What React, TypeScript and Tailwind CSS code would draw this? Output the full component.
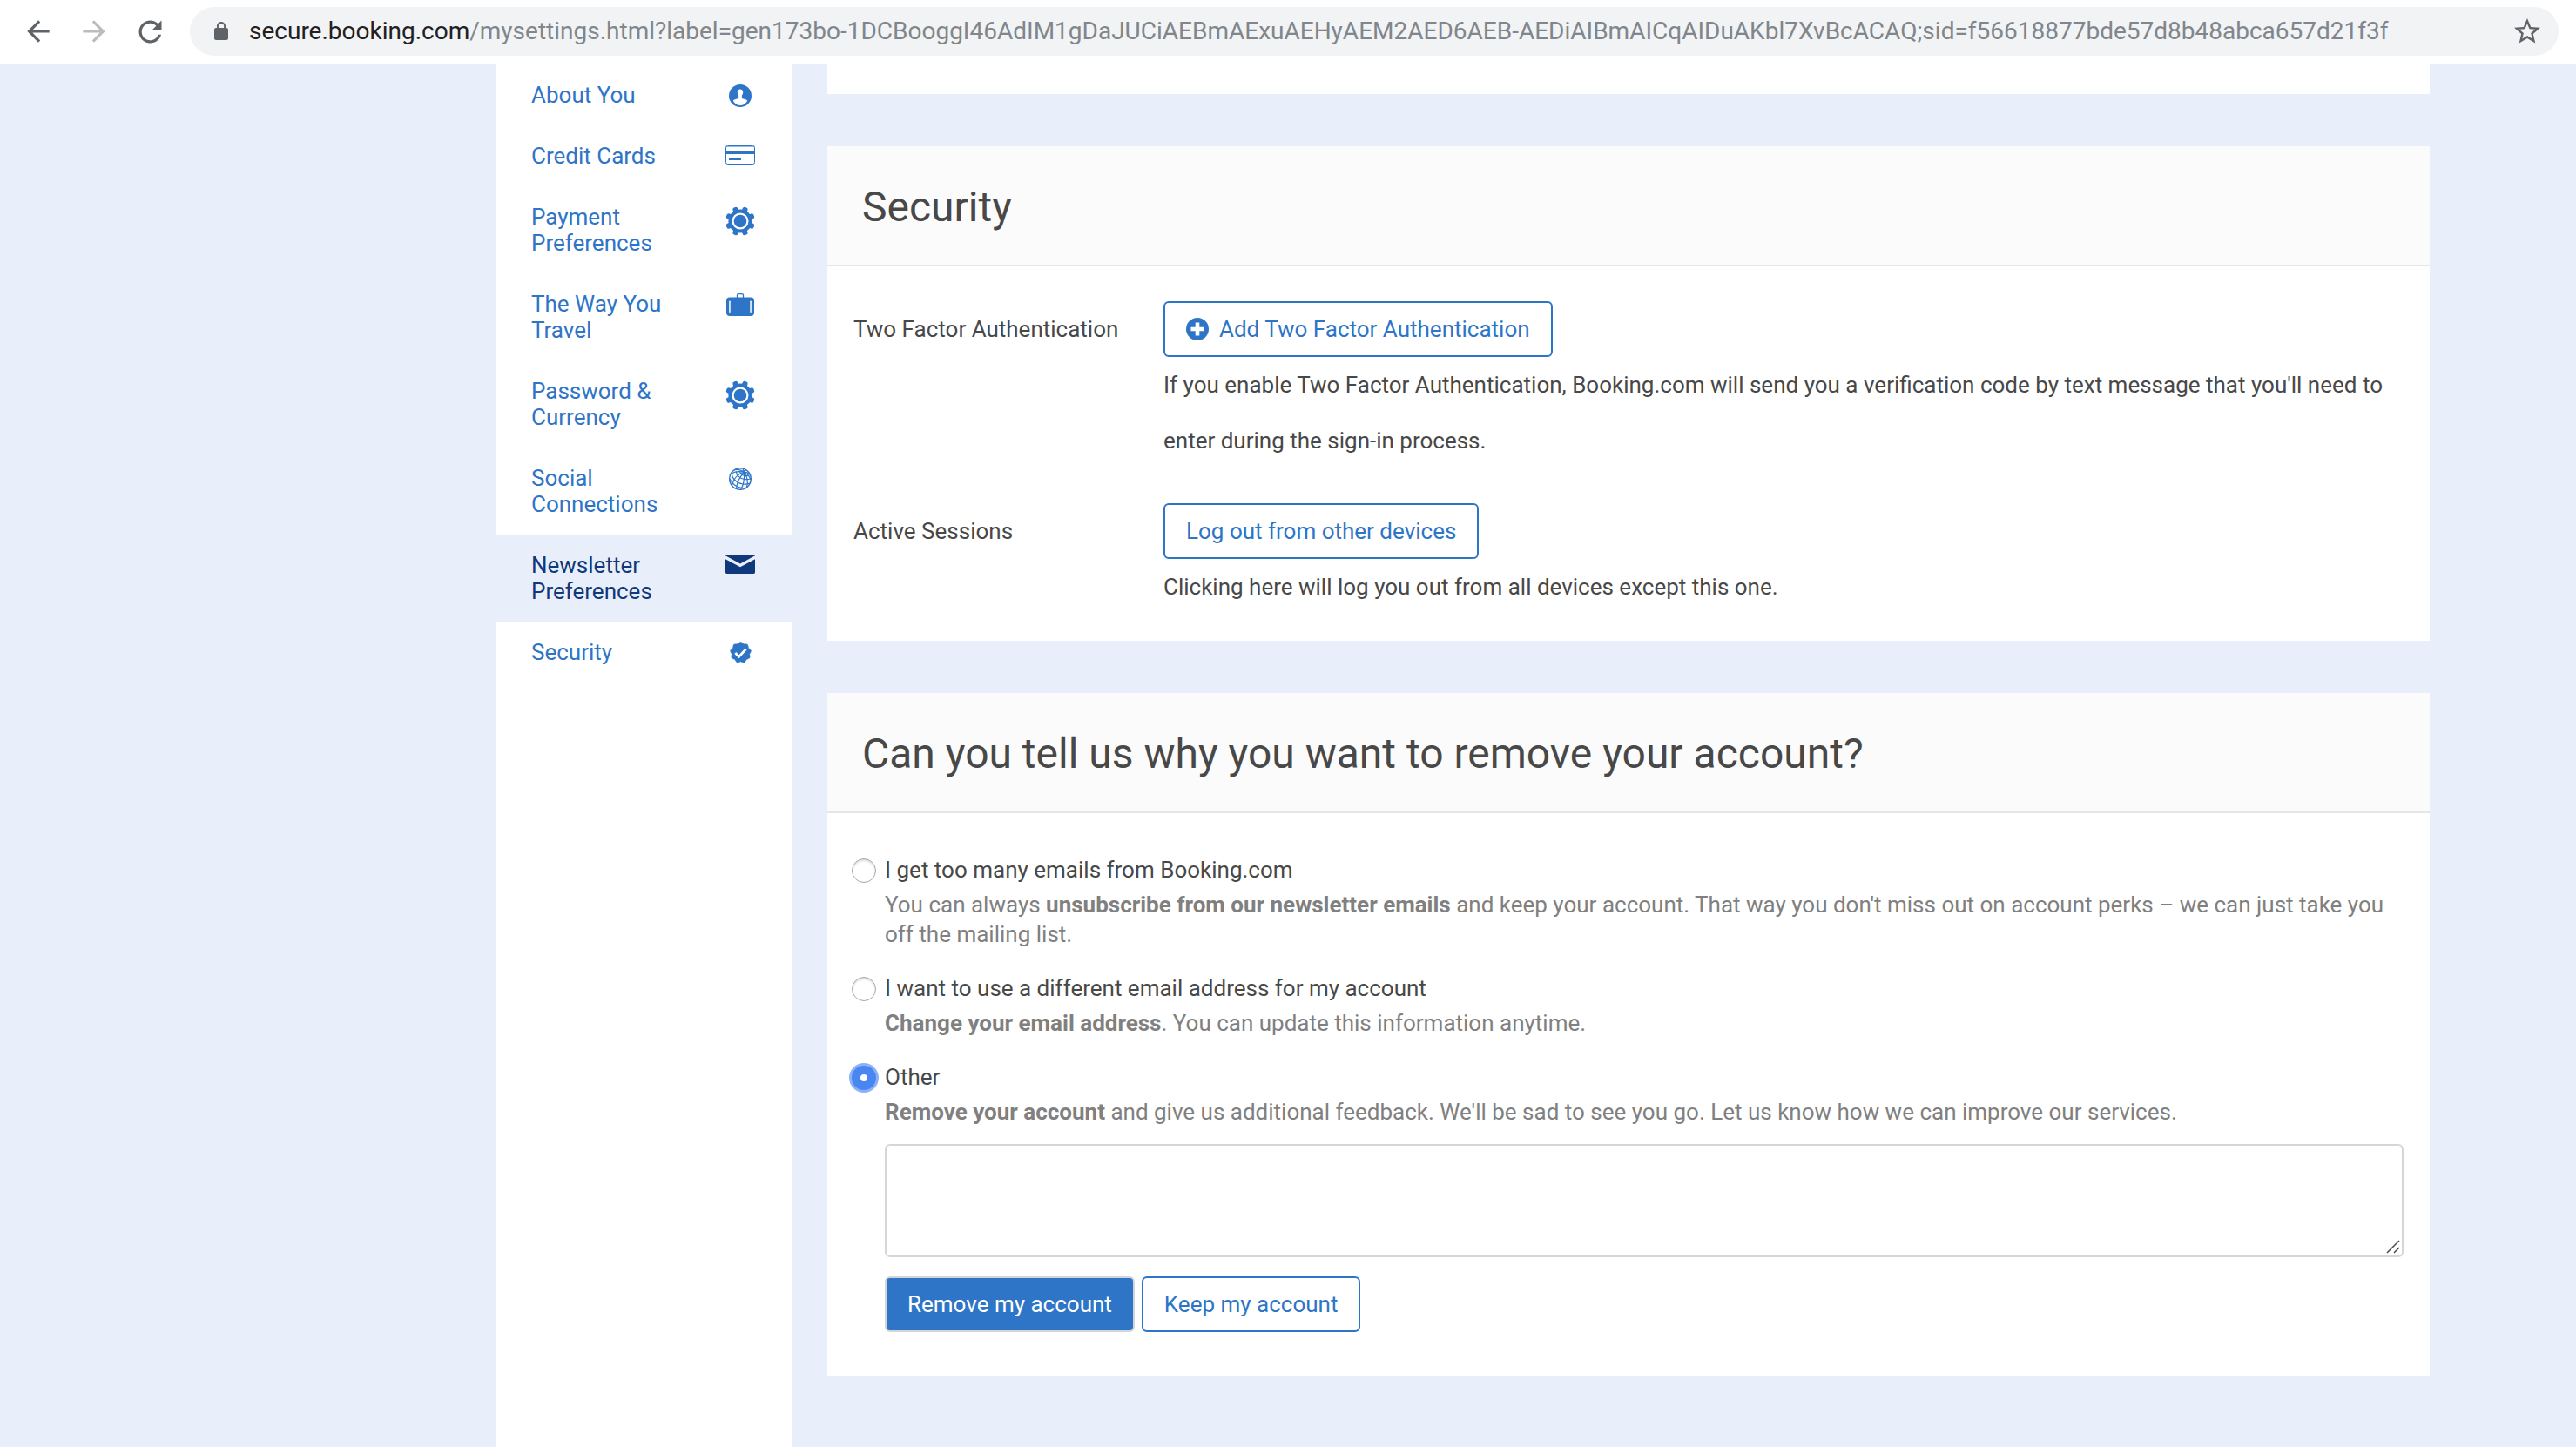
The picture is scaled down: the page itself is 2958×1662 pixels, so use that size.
import type { ReactNode } from "react";

function ArrowIcon() {
  return (
    <svg viewBox="0 0 24 24" className="size-[38px]" fill="currentColor" aria-hidden="true">
      <path d="M20 11H7.83l5.59-5.59L12 4l-8 8 8 8 1.41-1.41L7.83 13H20v-2z" />
    </svg>
  );
}

function ReloadIcon() {
  return (
    <svg viewBox="0 0 24 24" className="size-[39px]" fill="currentColor" aria-hidden="true">
      <path d="M17.65 6.35C16.2 4.9 14.21 4 12 4c-4.42 0-7.99 3.58-7.99 8s3.57 8 7.99 8c3.73 0 6.84-2.55 7.73-6h-2.08c-.82 2.33-3.04 4-5.65 4-3.31 0-6-2.69-6-6s2.69-6 6-6c1.66 0 3.14.69 4.22 1.78L13 11h7V4l-2.35 2.35z" />
    </svg>
  );
}

function LockIcon() {
  return (
    <svg viewBox="0 0 24 24" className="size-6 shrink-0" fill="currentColor" aria-hidden="true">
      <path d="M18 8h-1V6c0-2.76-2.24-5-5-5S7 3.24 7 6v2H6c-1.1 0-2 .9-2 2v10c0 1.1.9 2 2 2h12c1.1 0 2-.9 2-2V10c0-1.1-.9-2-2-2zM8.9 8V6a3.1 3.1 0 0 1 6.2 0v2z" />
    </svg>
  );
}

function StarIcon() {
  return (
    <svg viewBox="0 0 24 24" className="size-9" fill="currentColor" aria-hidden="true">
      <path d="M22 9.24l-7.19-.62L12 2 9.19 8.63 2 9.24l5.46 4.73L5.82 21 12 17.27 18.18 21l-1.63-7.03L22 9.24zM12 15.4l-3.76 2.27 1-4.28-3.32-2.88 4.38-.38L12 6.1l1.71 4.04 4.38.38-3.32 2.88 1 4.28L12 15.4z" />
    </svg>
  );
}

function PersonIcon() {
  return (
    <svg viewBox="0 0 26 26" className="size-[26px]" aria-hidden="true">
      <circle cx="13" cy="13" r="13" fill="currentColor" />
      <path
        d="M13 5.6c2 0 3.2 1.3 3.2 3.3 0 1.500-.5 2.700-1.300 3.600v2.600c0 .8.5 1.200 1.400 1.500 2 .5 3.600.8 5 1.800C19.700 21.900 16.700 24 13 24s-6.700-2.100-8.300-5.600c1.400-1 3-1.300 5-1.800.9-.3 1.400-.7 1.400-1.500v-2.600c-.8-.9-1.300-2.100-1.300-3.600 0-2 1.200-3.300 3.200-3.300z"
        fill="#fff"
      />
    </svg>
  );
}

function CardIcon() {
  return (
    <svg viewBox="0 0 34 22" className="h-[22px] w-[34px]" aria-hidden="true">
      <rect x=".5" y=".5" width="33" height="21" rx="2" fill="none" stroke="currentColor" />
      <rect x="1" y="1" width="32" height="1" fill="currentColor" opacity=".5" />
      <rect x="0" y="6" width="34" height="4" fill="currentColor" />
      <rect x="4" y="15" width="14" height="2" fill="currentColor" />
    </svg>
  );
}

const TEETH = [22.5, 67.5, 112.5, 157.5, 202.5, 247.5, 292.5, 337.5];

function GearIcon() {
  return (
    <svg viewBox="0 0 34 34" className="size-[34px]" aria-hidden="true">
      <circle cx="17" cy="17" r="13.6" fill="currentColor" />
      {TEETH.map((angle) => (
        <rect
          key={angle}
          x="13.9"
          y="0"
          width="6.2"
          height="8"
          rx="2.3"
          fill="currentColor"
          transform={`rotate(${angle} 17 17)`}
        />
      ))}
      <circle cx="17" cy="17" r="8.4" fill="currentColor" stroke="#fff" strokeWidth="2.2" />
    </svg>
  );
}

function SuitcaseIcon() {
  return (
    <svg viewBox="0 0 32 26" className="h-[26px] w-8" aria-hidden="true">
      <path d="M12.5 5V2.3C12.5 1.3 13 .7 14 .7h4c1 0 1.5.6 1.5 1.6V5" fill="none" stroke="currentColor" strokeWidth="1.3" />
      <rect x="0" y="4.5" width="32" height="21.5" rx="4" fill="currentColor" />
      <rect x="3.2" y="8.5" width="1.5" height="13.5" rx=".7" fill="#fff" />
      <rect x="27.3" y="8.5" width="1.5" height="13.5" rx=".7" fill="#fff" />
    </svg>
  );
}

function GlobeIcon() {
  return (
    <svg viewBox="0 0 26 26" className="size-[26px]" fill="none" stroke="currentColor" strokeWidth="1.2" aria-hidden="true">
      <circle cx="13" cy="13" r="12.3" strokeWidth="1.4" />
      <path d="M17.5 5.5C14 2.6 10 2 7 2.6" />
      <path d="M17.5 5.5C12 4 6.5 5 2.5 7" />
      <path d="M17.5 5.5C11 7 5.5 12 3.5 20.5" />
      <path d="M17.5 5.5C15 9 10 12 8.5 24" />
      <path d="M17.5 5.5C18 12 17 19 14 25" />
      <path d="M17.5 5.5C21 10 22.5 15 20.5 22.5" />
      <path d="M17.5 5.5C21 7.5 24 10 25 14" />
      <path d="M17.5 5.5C20 5.3 22 6 23.5 7.5" />
      <path d="M12.5 5c1 2.3 3.2 4 6 4.600 2 .3 3.800 0 5.200-.8" />
      <path d="M8.500 4.500c-.2 4 3.500 8 9.500 9 2.700.3 5 0 7-.8" />
      <path d="M3.500 6.500c-.5 5.500 4.500 11 12.500 12.500 3.200.4 6 0 8-1" />
      <path d="M1 13c2.500 5.500 8 9.500 14.500 10.500 1.500.1 3 0 4-.3" />
      <path d="M15 4.500l5-1.500M16 2l2 4" />
    </svg>
  );
}

function EnvelopeIcon() {
  return (
    <svg viewBox="0 0 34 22" className="h-[22px] w-[34px]" fill="currentColor" aria-hidden="true">
      <path d="M0 0h34v1.2L17 10.5 0 1.2z" />
      <path d="M0 5.2l17 9 17-9V20.3c0 1-.7 1.7-1.7 1.7H1.7C.7 22 0 21.3 0 20.3z" />
    </svg>
  );
}

const BADGE_POINTS = Array.from({ length: 36 }, (_, i) => {
  const radius = [12.2, 11.3, 10.3, 11.3][i % 4];
  const angle = (i * 10 * Math.PI) / 180;
  return `${(12.5 + radius * Math.sin(angle)).toFixed(2)},${(12.5 - radius * Math.cos(angle)).toFixed(2)}`;
}).join(" ");

function BadgeIcon() {
  return (
    <svg viewBox="0 0 25 25" className="size-[25px]" aria-hidden="true">
      <polygon points={BADGE_POINTS} fill="currentColor" stroke="currentColor" strokeLinejoin="round" strokeWidth=".5" />
      <path d="M6.3 12.9l4.3 4.3L18.6 8.6" fill="none" stroke="#fff" strokeWidth="2.8" />
    </svg>
  );
}

function PlusIcon() {
  return (
    <svg viewBox="0 0 26 26" className="size-[26px]" aria-hidden="true">
      <circle cx="13" cy="13" r="13" fill="currentColor" />
      <path d="M13 5.5v15M5.5 13h15" stroke="#fff" strokeWidth="4.6" />
    </svg>
  );
}

type NavItem = { label: string; icon: ReactNode; active?: boolean };

const NAV: NavItem[] = [
  { label: "About You", icon: <PersonIcon /> },
  { label: "Credit Cards", icon: <CardIcon /> },
  { label: "Payment Preferences", icon: <GearIcon /> },
  { label: "The Way You Travel", icon: <SuitcaseIcon /> },
  { label: "Password & Currency", icon: <GearIcon /> },
  { label: "Social Connections", icon: <GlobeIcon /> },
  { label: "Newsletter Preferences", icon: <EnvelopeIcon />, active: true },
  { label: "Security", icon: <BadgeIcon /> },
];

function Toolbar() {
  return (
    <header className="flex items-center gap-[26px] border-b border-[#b3b4b8] bg-white pt-2 pr-5 pb-[9px] pl-[25px] text-[#5f6368]">
      <button type="button" aria-label="Back">
        <ArrowIcon />
      </button>
      <button type="button" aria-label="Forward" className="rotate-180 text-[#babcbe]">
        <ArrowIcon />
      </button>
      <button type="button" aria-label="Reload">
        <ReloadIcon />
      </button>
      <div className="flex h-14 min-w-0 flex-1 items-center gap-5 rounded-full bg-[#f1f3f4] pr-[18px] pl-6">
        <LockIcon />
        <div
          role="textbox"
          aria-label="Address"
          contentEditable
          suppressContentEditableWarning
          spellCheck={false}
          className="min-w-0 flex-1 overflow-hidden text-[28px] leading-9 whitespace-nowrap text-[#80868b] outline-none"
        >
          <span className="text-[#202124]">secure.booking.com</span>
          /mysettings.html?label=gen173bo-1DCBooggI46AdIM1gDaJUCiAEBmAExuAEHyAEM2AED6AEB-AEDiAIBmAICqAIDuAKbl7XvBcACAQ;sid=f56618877bde57d8b48abca657d21f3f
        </div>
        <button type="button" aria-label="Bookmark this page">
          <StarIcon />
        </button>
      </div>
    </header>
  );
}

function Sidebar() {
  return (
    <nav aria-label="Settings" className="w-[340px] shrink-0 bg-white leading-[30px]">
      <ul>
        {NAV.map(({ label, icon, active }) => (
          <li key={label}>
            <a
              href="#"
              aria-current={active ? "page" : undefined}
              className={
                active
                  ? "flex items-start gap-8 bg-[#e8effa] px-10 py-5 text-[#10387c]"
                  : "flex items-start gap-8 px-10 py-5 text-[#2e75c7]"
              }
            >
              <span className="flex-1">{label}</span>
              <span className="flex h-[30px] w-[40px] justify-center pt-[3px]">{icon}</span>
            </a>
          </li>
        ))}
      </ul>
    </nav>
  );
}

function Card({ title, children }: { title: string; children: ReactNode }) {
  return (
    <section className="bg-white">
      <h2 className="border-b-2 border-[#e6e6e6] bg-[#fbfbfb] px-10 pt-[38px] pb-[34px] text-5xl leading-16">
        {title}
      </h2>
      {children}
    </section>
  );
}

function OutlineButton({ children }: { children: ReactNode }) {
  return (
    <button
      type="button"
      className="flex h-16 items-center gap-3 rounded-md border-2 border-[#2e75c7] bg-white px-6 text-[#2e75c7]"
    >
      {children}
    </button>
  );
}

function SettingRow({ label, action, note }: { label: string; action: ReactNode; note: string }) {
  return (
    <div className="flex leading-16">
      <h3 className="w-[356px] shrink-0">{label}</h3>
      <div className="flex flex-1 flex-col items-start">
        {action}
        <p>{note}</p>
      </div>
    </div>
  );
}

function Reason({
  id,
  label,
  checked,
  children,
}: {
  id: string;
  label: string;
  checked?: boolean;
  children: ReactNode;
}) {
  return (
    <div className="flex items-start gap-2.5">
      <input
        type="radio"
        id={id}
        name="reason"
        defaultChecked={checked}
        className="mt-1 size-7 shrink-0 appearance-none rounded-full border border-[#a8a8a8] bg-white shadow-[inset_0_2px_2px_#dedede] checked:border-[10px] checked:border-[#4a86f2] checked:shadow-none checked:ring-3 checked:ring-[#8cb1f6]"
      />
      <div className="flex-1 leading-[34px]">
        <label htmlFor={id} className="mb-1.5 block">
          {label}
        </label>
        {children}
      </div>
    </div>
  );
}

export default function App() {
  return (
    <div className="flex min-h-screen flex-col bg-[#e8effa] font-[Roboto,Inter,sans-serif] text-[26px] text-[#484848]">
      <Toolbar />
      <div className="flex flex-1 gap-10 pr-[168px] pl-[570px]">
        <Sidebar />
        <main className="flex min-w-0 flex-1 flex-col gap-[60px]">
          <div className="h-[34px] bg-white" />

          <Card title="Security">
            <div className="flex flex-col gap-10 px-[30px] pt-10 pb-[30px]">
              <SettingRow
                label="Two Factor Authentication"
                action={
                  <OutlineButton>
                    <PlusIcon />
                    Add Two Factor Authentication
                  </OutlineButton>
                }
                note="If you enable Two Factor Authentication, Booking.com will send you a verification code by text message that you'll need to enter during the sign-in process."
              />
              <SettingRow
                label="Active Sessions"
                action={<OutlineButton>Log out from other devices</OutlineButton>}
                note="Clicking here will log you out from all devices except this one."
              />
            </div>
          </Card>

          <Card title="Can you tell us why you want to remove your account?">
            <form className="flex flex-col gap-7 pt-12 pr-[30px] pb-[50px] pl-7">
              <Reason id="reason-emails" label="I get too many emails from Booking.com">
                <p className="text-[#808080]">
                  You can always{" "}
                  <a href="#" className="font-bold">
                    unsubscribe from our newsletter emails
                  </a>{" "}
                  and keep your account. That way you don't miss out on account perks – we can just take you off the
                  mailing list.
                </p>
              </Reason>
              <Reason id="reason-address" label="I want to use a different email address for my account">
                <p className="text-[#808080]">
                  <a href="#" className="font-bold">
                    Change your email address
                  </a>
                  . You can update this information anytime.
                </p>
              </Reason>
              <Reason id="reason-other" label="Other" checked>
                <p className="text-[#808080]">
                  <b>Remove your account</b> and give us additional feedback. We'll be sad to see you go. Let us know
                  how we can improve our services.
                </p>
                <div className="relative mt-5">
                  <textarea
                    aria-label="Additional feedback"
                    className="block h-[130px] w-full resize-none rounded-md border-2 border-[#d6d6d6] bg-white p-3"
                  />
                  <svg
                    viewBox="0 0 16 16"
                    className="absolute right-1 bottom-1 size-4"
                    stroke="#4a4a4a"
                    strokeWidth="1.5"
                    aria-hidden="true"
                  >
                    <path d="M1 15L15 1M9 15l6-6" />
                  </svg>
                </div>
                <div className="mt-[22px] flex gap-2">
                  <button
                    type="button"
                    className="h-16 rounded-md border-2 border-[#d3d5d8] bg-[#2e75c7] px-6 text-white"
                  >
                    Remove my account
                  </button>
                  <OutlineButton>Keep my account</OutlineButton>
                </div>
              </Reason>
            </form>
          </Card>
        </main>
      </div>
    </div>
  );
}
